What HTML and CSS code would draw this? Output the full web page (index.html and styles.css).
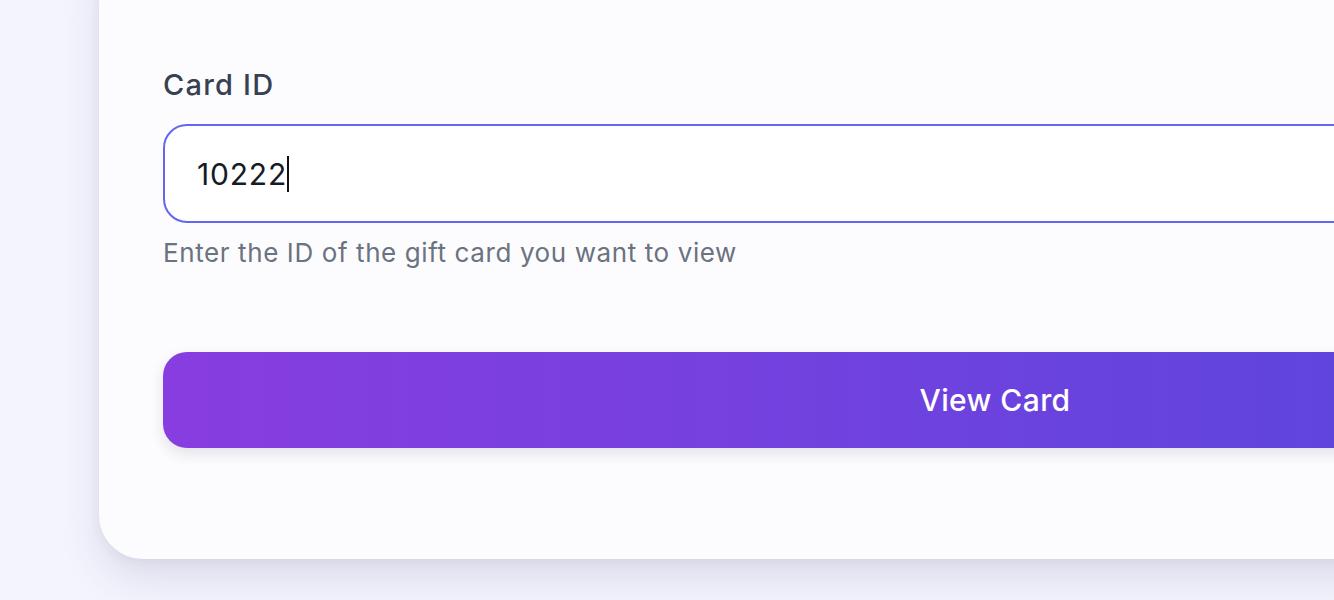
FILE: index.html
```html
<!DOCTYPE html>
<html>
<head>
<meta charset="utf-8">
<link rel="stylesheet" href="styles.css">
</head>
<body>
<div class="page">
  <div class="card">
    <label class="label">Card ID</label>
    <div class="input"><span class="value">10222</span><span class="caret"></span></div>
    <p class="help">Enter the ID of the gift card you want to view</p>
    <button class="btn">View Card</button>
  </div>
</div>
</body>
</html>
```
FILE: styles.css
```css
html, body {
  margin: 0;
  padding: 0;
}
body {
  background: #f3f4fd;
  font-family: Inter, "Noto Sans", sans-serif;
  overflow: hidden;
  height: 600px;
}
.page {
  padding-left: 99px;
}
.card {
  box-sizing: border-box;
  width: 1792px;
  margin-top: -60px;
  padding: 125px 64px 111px 64px;
  background: #fcfcfe;
  border-radius: 44px;
  box-shadow: 0 20px 40px rgba(60, 60, 100, 0.12), 0 4px 12px rgba(60, 60, 100, 0.05);
  display: flex;
  flex-direction: column;
}
.label {
  display: block;
  font-size: 29px;
  letter-spacing: 1.2px;
  line-height: 40px;
  font-weight: 500;
  color: #374151;
  margin-bottom: 19px;
}
.input {
  box-sizing: border-box;
  height: 99px;
  border: 2px solid #6366f1;
  border-radius: 24px;
  background: #ffffff;
  padding: 0 32px;
  display: flex;
  align-items: center;
  font-size: 30px;
  letter-spacing: 0.8px;
  color: #161b26;
}
.caret {
  display: inline-block;
  width: 2px;
  height: 36px;
  background: #111;
  margin-left: 0;
}
.help {
  margin: 12px 0 0 0;
  font-size: 26px;
  letter-spacing: 0.6px;
  line-height: 36px;
  color: #6b7280;
}
.btn {
  margin-top: 81px;
  height: 96px;
  border: none;
  border-radius: 24px;
  background: linear-gradient(90deg, #883de0 0%, #4f48dc 100%);
  color: #ffffff;
  font-family: Inter, "Noto Sans", sans-serif;
  font-size: 30px;
  letter-spacing: 0.4px;
  font-weight: 500;
  box-shadow: 0 6px 14px rgba(40, 40, 80, 0.12);
}
```
